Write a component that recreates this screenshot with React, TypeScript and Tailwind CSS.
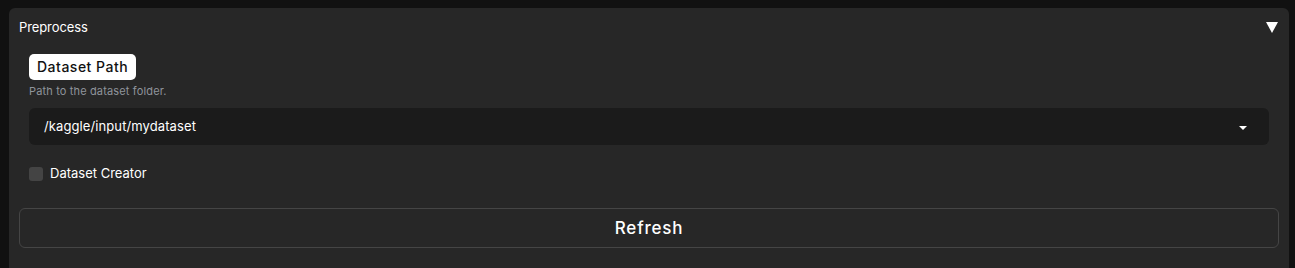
export default function App() {
  return (
    <div className="h-[268px] w-[1295px] overflow-hidden bg-[#111111] pl-[9px] pr-[6px] pt-[8px] font-['Inter',_'Liberation_Sans',_sans-serif] text-white">
      <div className="h-[300px] rounded-t-[6px] bg-[#272727] px-[10px]">
        <div className="flex h-[38px] items-center justify-between">
          <span className="mt-[2px] text-[13px] tracking-[-0.1px]">Preprocess</span>
          <svg width="12" height="11" viewBox="0 0 12 11" className="mr-[1px] mt-[1px]">
            <path d="M0 0 L12 0 L6 11 Z" fill="#ffffff" />
          </svg>
        </div>
        <div className="px-[10px]">
          <div className="mt-[8px] inline-block rounded-[5px] bg-white px-[8px] py-[4px] text-[14px] font-medium leading-[18px] tracking-[0.5px] text-[#111]">
            Dataset Path
          </div>
          <div className="mt-[4px] text-[11px] leading-[14px] tracking-[0.15px] text-[#8f949b]">Path to the dataset folder.</div>
          <div className="mt-[10px] flex h-[37px] items-center justify-between rounded-[6px] bg-[#1b1b1b] pl-[15px] pr-[22px]">
            <span className="text-[13px] tracking-[0.1px]">/kaggle/input/mydataset</span>
            <svg width="8" height="4" viewBox="0 0 8 4" className="mt-[2px]">
              <path d="M0 0 L8 0 L4 4 Z" fill="#ffffff" />
            </svg>
          </div>
          <div className="mt-[19px] flex items-center gap-[7px]">
            <div className="h-[14px] w-[14px] rounded-[3px] bg-[#444444]" />
            <span className="text-[13px]">Dataset Creator</span>
          </div>
        </div>
        <button className="mt-[24px] flex h-[40px] w-full items-center justify-center rounded-[6px] border border-[#454545] pt-[3px] text-[17px] font-medium tracking-[0.8px]">
          Refresh
        </button>
      </div>
    </div>
  );
}
